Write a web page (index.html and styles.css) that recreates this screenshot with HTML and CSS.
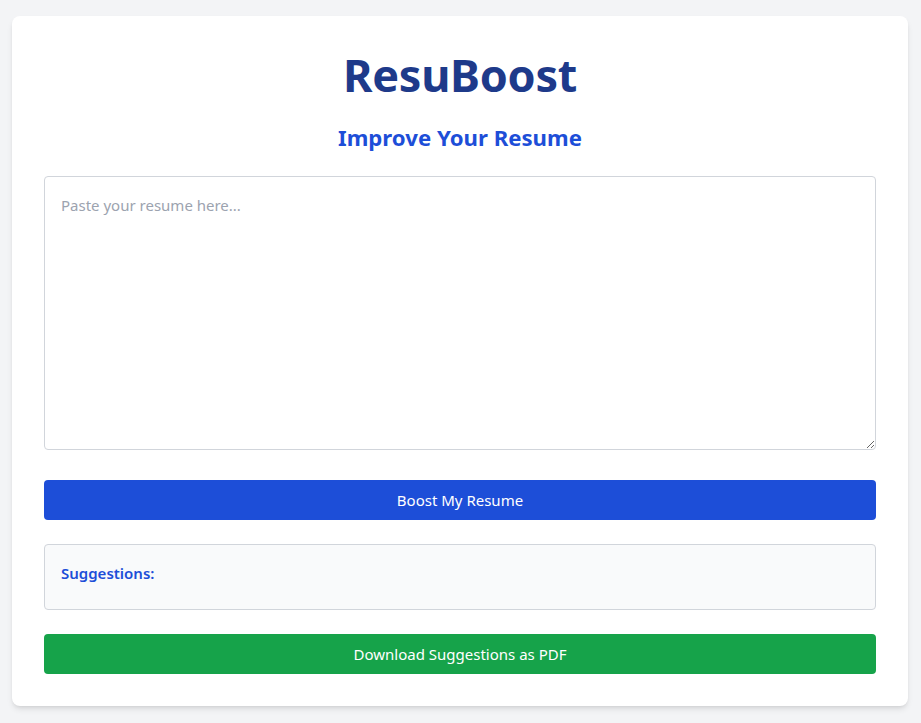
FILE: index.html
```html
<!DOCTYPE html>
<html lang="en">
<head>
<meta charset="utf-8">
<title>ResuBoost</title>
<link rel="stylesheet" href="styles.css">
</head>
<body>
<main class="card">
  <h1 class="title">ResuBoost</h1>
  <h2 class="subtitle">Improve Your Resume</h2>
  <textarea class="resume-input" placeholder="Paste your resume here..."></textarea>
  <button class="btn btn-primary">Boost My Resume</button>
  <section class="suggestions">
    <h3 class="suggestions-title">Suggestions:</h3>
  </section>
  <button class="btn btn-success">Download Suggestions as PDF</button>
</main>
</body>
</html>
```
FILE: styles.css
```css
* { box-sizing: border-box; }
html, body { margin: 0; padding: 0; }
body {
  background: #f3f4f6;
  font-family: "Noto Sans", "Open Sans", "Liberation Sans", sans-serif;
  padding: 16px 1px 16px 0;
  color: #111827;
}
.card {
  max-width: 896px;
  margin: 0 auto;
  background: #ffffff;
  border-radius: 8px;
  box-shadow: 0 4px 6px -1px rgba(0,0,0,0.1), 0 2px 4px -2px rgba(0,0,0,0.1);
  padding: 32px;
  display: flex;
  flex-direction: column;
}
.title {
  margin: 0;
  text-align: center;
  font-size: 45px;
  line-height: 54px;
  font-weight: 700;
  color: #1e3a8a;
  letter-spacing: -0.3px;
}
.subtitle {
  margin: 20px 0 22px;
  text-align: center;
  font-size: 22.2px;
  line-height: 32px;
  font-weight: 700;
  color: #1d4ed8;
}
.resume-input {
  display: block;
  width: 100%;
  height: 274px;
  border: 1px solid #d1d5db;
  border-radius: 4px;
  padding: 16px;
  font-family: inherit;
  font-size: 15px;
  line-height: 24px;
  color: #111827;
  resize: vertical;
  margin: 0 0 30px;
}
.resume-input::placeholder { color: #9ca3af; }
.btn {
  display: block;
  width: 100%;
  height: 40px;
  border: none;
  border-radius: 4px;
  color: #ffffff;
  font-family: inherit;
  font-size: 15px;
  cursor: pointer;
}
.btn-primary { background: #1d4ed8; }
.btn-success { background: #16a34a; }
.suggestions {
  margin: 24px 0;
  background: #f9fafb;
  border: 1px solid #d1d5db;
  border-radius: 4px;
  padding: 16px;
}
.suggestions-title {
  margin: 0 0 8px;
  font-size: 15px;
  line-height: 24px;
  font-weight: 600;
  color: #1d4ed8;
}
```
